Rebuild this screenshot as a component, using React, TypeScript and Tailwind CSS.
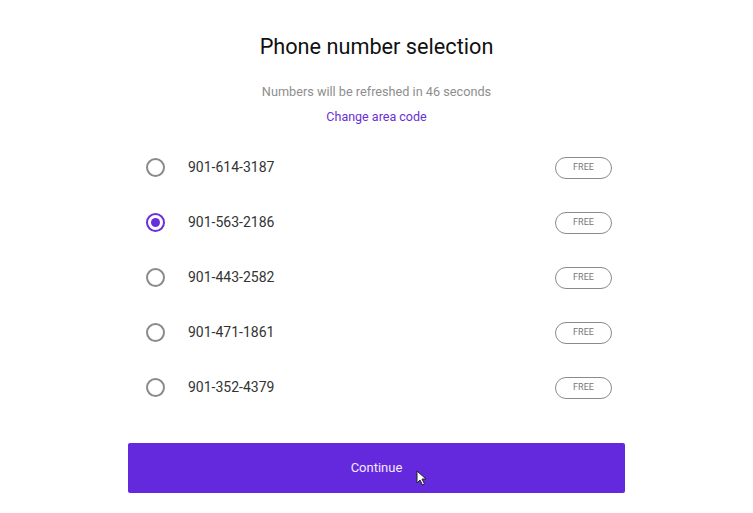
import React from "react";

const numbers = ["901-614-3187", "901-563-2186", "901-443-2582", "901-471-1861", "901-352-4379"];

function Radio({ checked }: { checked: boolean }) {
  return checked ? (
    <span className="flex size-[19px] items-center justify-center rounded-full border-2 border-[#6a2fd9]">
      <span className="size-[9px] rounded-full bg-[#6a2fd9]" />
    </span>
  ) : (
    <span className="size-[19px] rounded-full border-2 border-[#8a8a8a]" />
  );
}

export default function App() {
  return (
    <div className="flex h-[513px] w-[753px] flex-col items-center bg-white font-['Roboto',sans-serif]">
      <h1 className="mt-[33px] text-[21.7px] leading-[28px] text-[#111]">Phone number selection</h1>
      <p className="mt-[23px] text-[12.7px] leading-[16px] text-[#8e8e8e]">Numbers will be refreshed in 46 seconds</p>
      <button className="mt-[9px] text-[12.5px] leading-[16px] text-[#6a2fd6]">Change area code</button>

      <ul className="mt-[15px] flex w-[497px] flex-col">
        {numbers.map((n, i) => (
          <li key={n} className="flex h-[55px] items-center pl-[18px] pr-[13px]">
            <Radio checked={i === 1} />
            <span className="ml-[23px] text-[14px] text-[#333]">{n}</span>
            <span className="ml-auto flex h-[22px] w-[57px] items-center justify-center rounded-full border border-[#8a8a8a] text-[9px] text-[#777]">
              FREE
            </span>
          </li>
        ))}
      </ul>

      <div className="relative mt-[28px]">
        <button className="flex h-[50px] w-[497px] items-center justify-center rounded-[2px] bg-[#6429dd] text-[13px] text-[#f3eaff]">
          Continue
        </button>
        <svg className="absolute left-[288px] top-[27px]" width="11" height="16" viewBox="0 0 11 16">
          <path d="M1 1 L1 13 L4 10 L6.5 15 L8.5 14 L6 9 L10 9 Z" fill="#fff" stroke="#222" strokeWidth="1" strokeLinejoin="round" />
        </svg>
      </div>
    </div>
  );
}
